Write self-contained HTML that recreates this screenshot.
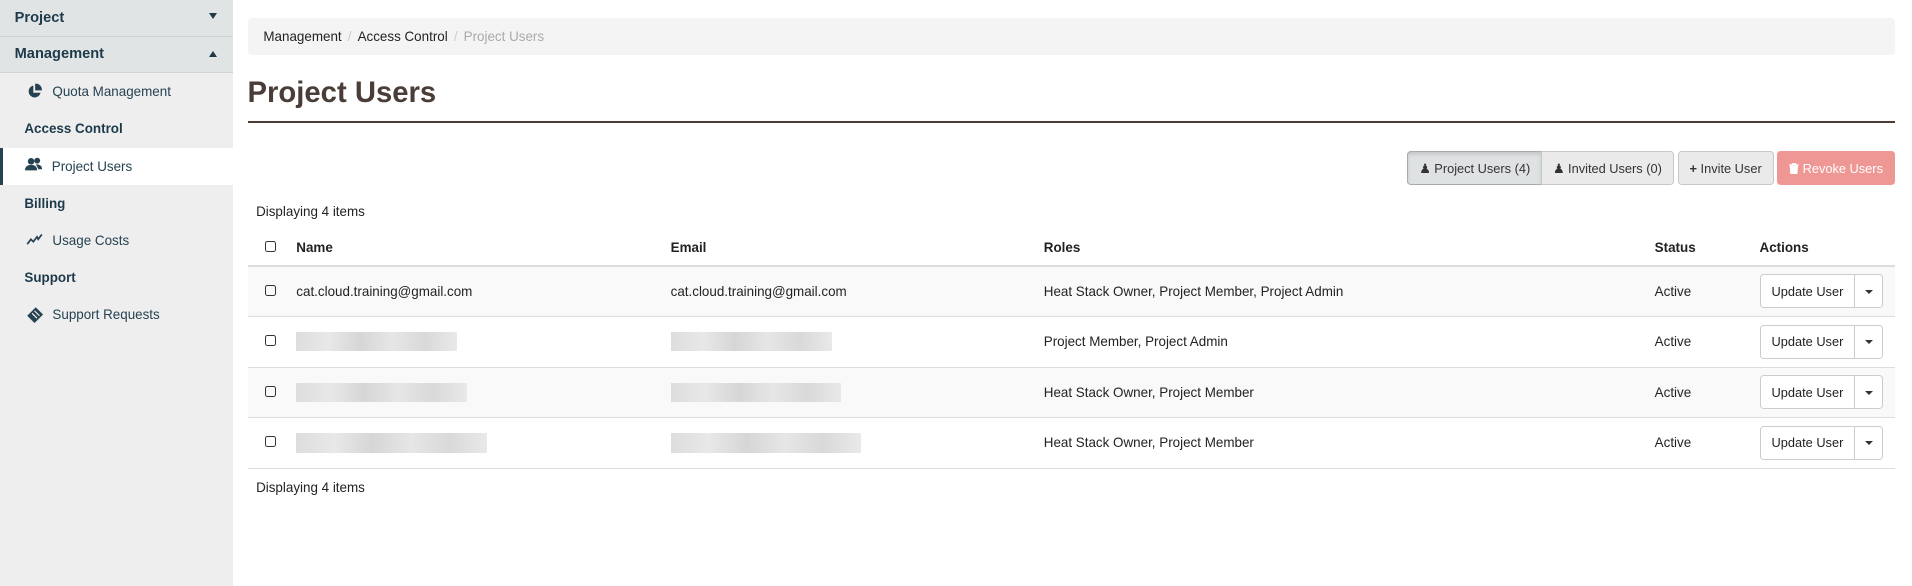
<!DOCTYPE html>
<html><head><meta charset="utf-8"><style>
*{box-sizing:border-box;margin:0;padding:0}
html,body{width:1912px;height:586px;overflow:hidden;background:#fff}
#w{zoom:1.21939;width:1568px;height:481px;position:relative;font-family:"Liberation Sans",sans-serif;font-size:11px;color:#222}
.sb{position:absolute;left:0;top:0;width:191px;height:481px;background:#eeeeee}
.sh{height:30px;background:#e0e4e4;border-bottom:1px solid #cfd4d4;font-weight:bold;color:#1d3a4a;padding:8px 12px;position:relative;font-size:12px}
.sh .c{position:absolute;right:13px;top:11px;width:0;height:0;border-left:4px solid transparent;border-right:4px solid transparent}
.si{height:30.5px;padding:9px 0 0 43px;color:#264252;position:relative;white-space:nowrap}
.si svg{position:absolute;left:21px;top:8px}
.sg{height:30.5px;padding:9px 0 0 20px;font-weight:bold;color:#1d3a4a}
.act{background:#fff;border-left:3px solid #264252;padding-left:40px}
.act svg{left:18px}
.bc{position:absolute;left:203px;top:15px;width:1351px;height:30px;background:#f4f4f4;border-radius:3px;padding:9px 13px;font-size:11px}
.bc .s{color:#ccc;margin:0 5px}
h1{position:absolute;left:203px;top:63px;font-size:24px;color:#4a3c36;font-weight:bold}
.hr{position:absolute;left:203px;top:99px;width:1351px;height:2px;background:#4b3c35}
.btns{position:absolute;top:124px;right:14px;display:flex}
.b{height:28px;border:1px solid #c8c8c8;background:#eaeaea;padding:7px 9px;font-size:10.5px;color:#333;margin-left:-1px;white-space:nowrap}
.b.on{background:#dfe2e3;box-shadow:inset 0 2px 3px rgba(0,0,0,.12);border-color:#aaa;border-radius:3px 0 0 3px}
.b.r{background:#ee9794;border-color:#ee9794;color:#fff;border-radius:3px;margin-left:3px}
.b.m{margin-left:3px;border-radius:3px}
.disp{position:absolute;left:210px;font-size:11px}
table{position:absolute;left:203px;top:188px;width:1351px;border-collapse:collapse}
td,th{text-align:left;padding:0 7px;font-size:11px;vertical-align:middle;white-space:nowrap}
th{height:30px;border-bottom:2px solid #ddd}
td{border-bottom:1px solid #ddd;height:41.5px}
tr.st td{background:#f9f9f9}
.cb{width:9px;height:9px;border:1.2px solid #333;border-radius:2px;display:inline-block;margin-left:7px}
.bl{display:inline-block;height:16px;background:linear-gradient(90deg,#ddd,#e8e8e8 20%,#d6d6d6 40%,#e6e6e6 60%,#d9d9d9 80%,#e9e9e9);vertical-align:middle}
.ub{display:inline-flex;border:1px solid #ccc;border-radius:3px;height:28px;background:#fff}
.ub span{padding:7px 9px;font-size:10.5px;white-space:nowrap}
.ub i{width:23px;border-left:1px solid #ccc;position:relative}
.ub i:after{content:"";position:absolute;left:8px;top:12px;border-left:3.5px solid transparent;border-right:3.5px solid transparent;border-top:4px solid #333}
</style></head><body><div id="w">
<div class="sb">
<div class="sh">Project<span class="c" style="border-top:5px solid #1d3a4a"></span></div>
<div class="sh">Management<span class="c" style="border-bottom:5px solid #1d3a4a;top:12px"></span></div>
<div class="si"><svg width="14" height="14" viewBox="0 0 14 14"><path d="M6 2A5 5 0 1 0 12 8H6Z" fill="#264252"/><path d="M7.5 0.5A5 5 0 0 1 13 6H7.5Z" fill="#264252"/></svg>Quota Management</div>
<div class="sg">Access Control</div>
<div class="si act"><svg width="15" height="13" viewBox="0 0 15 13"><circle cx="5" cy="3.5" r="2.7" fill="#264252"/><path d="M0 11c0-3 2-4.5 5-4.5s5 1.5 5 4.5z" fill="#264252"/><circle cx="10" cy="3" r="2.4" fill="#264252"/><path d="M9 6c3 0 5 1 5 4h-3z" fill="#264252"/></svg>Project Users</div>
<div class="sg">Billing</div>
<div class="si"><svg width="15" height="12" viewBox="0 0 15 12"><path d="M1 10L4 6L6 8L9 4L10 6L13 2" fill="none" stroke="#264252" stroke-width="1.4"/></svg>Usage Costs</div>
<div class="sg">Support</div>
<div class="si"><svg width="15" height="14" viewBox="0 0 15 14"><path d="M1 8L8 1L14 7L7 14Z" fill="#264252"/><path d="M5 6L9 10M7 4L11 8" stroke="#eee" stroke-width="1"/></svg>Support Requests</div>
</div>
<div class="bc">Management<span class="s">/</span>Access Control<span class="s">/</span><span style="color:#aaa">Project Users</span></div>
<h1>Project Users</h1>
<div class="hr"></div>
<div class="btns">
<div class="b on">&#9823; Project Users (4)</div>
<div class="b" style="border-radius:0 3px 3px 0">&#9823; Invited Users (0)</div>
<div class="b m"><b>+</b> Invite User</div>
<div class="b r"><svg width="8" height="9" viewBox="0 0 8 9" style="vertical-align:-1px"><path d="M0 1.5H8M2.5 1.5V0.5H5.5V1.5M1 2.5H7L6.5 9H1.5Z" fill="#fff" stroke="#fff" stroke-width="0.8"/></svg> Revoke Users</div>
</div>
<div class="disp" style="top:167px">Displaying 4 items</div>
<table>
<tr><th style="width:33px"><span class="cb"></span></th><th style="width:307px">Name</th><th style="width:306px">Email</th><th style="width:501px">Roles</th><th style="width:86px">Status</th><th>Actions</th></tr>
<tr class="st"><td><span class="cb"></span></td><td>cat.cloud.training@gmail.com</td><td>cat.cloud.training@gmail.com</td><td>Heat Stack Owner, Project Member, Project Admin</td><td>Active</td><td><div class="ub"><span>Update User</span><i></i></div></td></tr>
<tr><td><span class="cb"></span></td><td><span class="bl" style="width:132px"></span></td><td><span class="bl" style="width:132px"></span></td><td>Project Member, Project Admin</td><td>Active</td><td><div class="ub"><span>Update User</span><i></i></div></td></tr>
<tr class="st"><td><span class="cb"></span></td><td><span class="bl" style="width:140px"></span></td><td><span class="bl" style="width:140px"></span></td><td>Heat Stack Owner, Project Member</td><td>Active</td><td><div class="ub"><span>Update User</span><i></i></div></td></tr>
<tr><td><span class="cb"></span></td><td><span class="bl" style="width:156px"></span></td><td><span class="bl" style="width:156px"></span></td><td>Heat Stack Owner, Project Member</td><td>Active</td><td><div class="ub"><span>Update User</span><i></i></div></td></tr>
</table>
<div class="disp" style="top:394px">Displaying 4 items</div>
</div></body></html>
